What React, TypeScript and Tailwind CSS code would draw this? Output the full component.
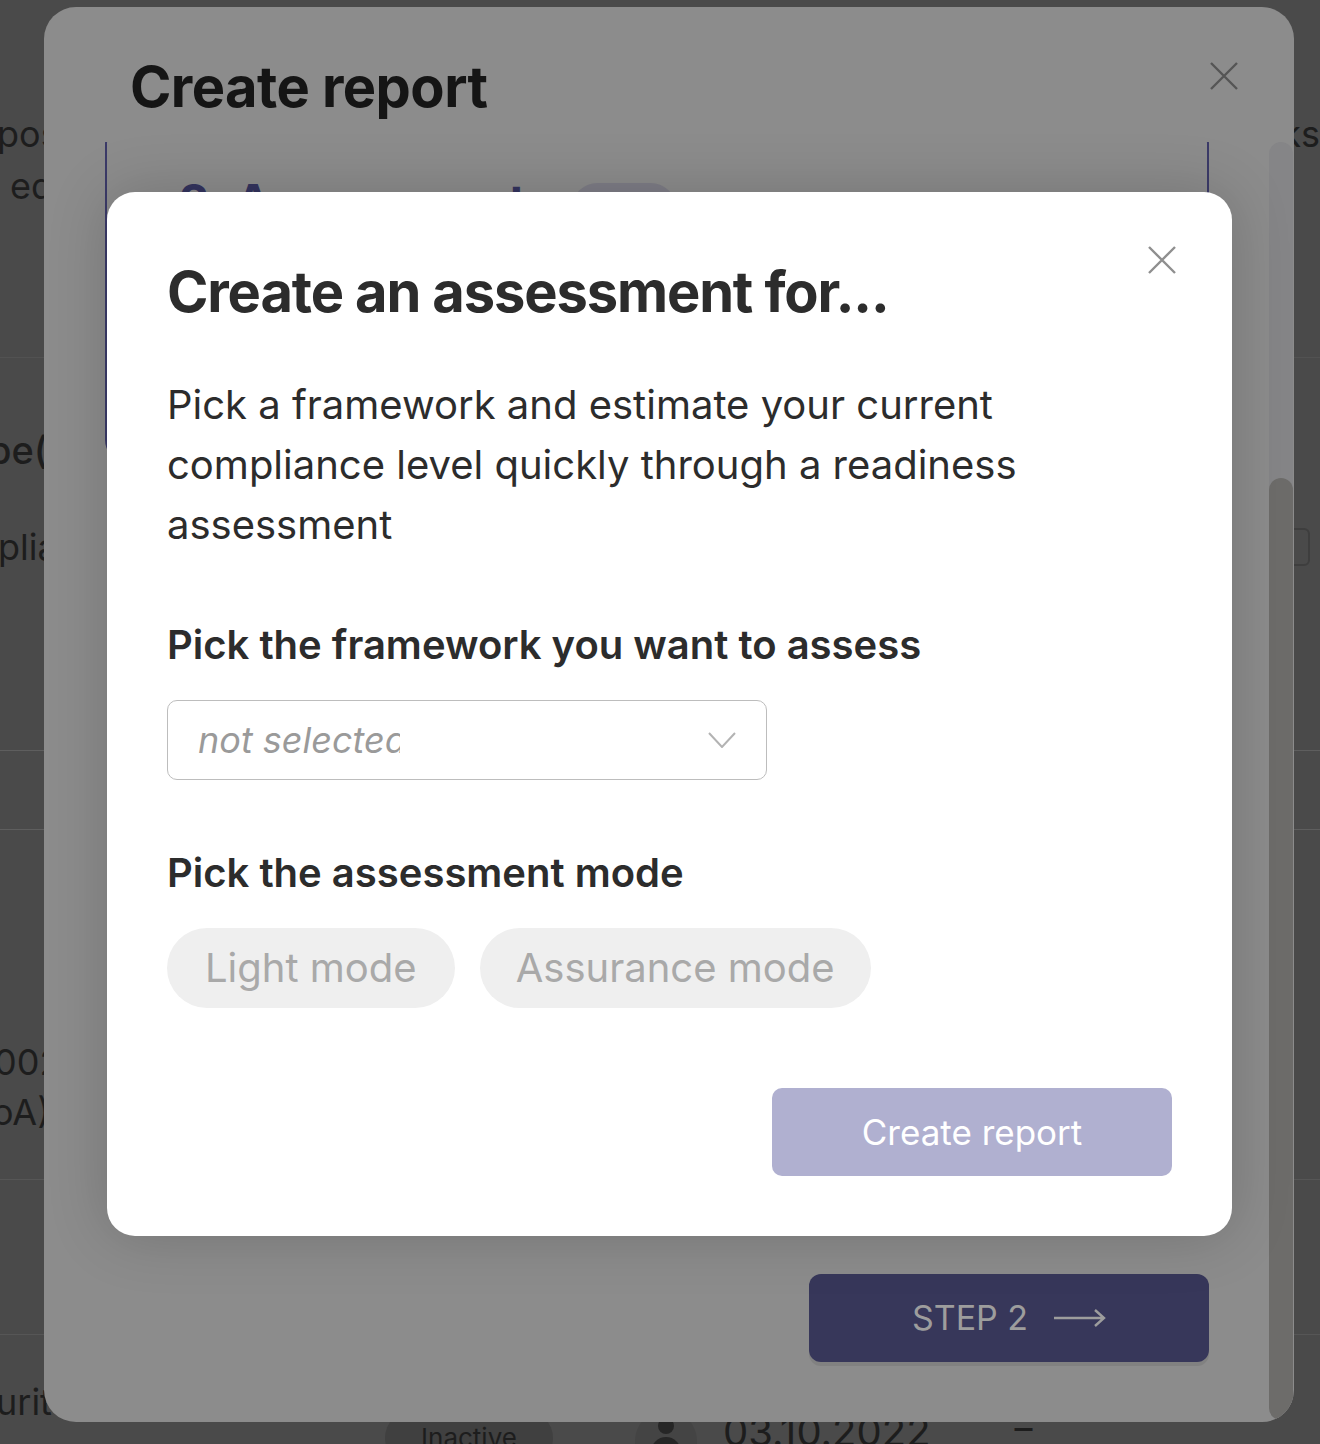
import React from 'react';

const CloseIcon = ({ className }: { className: string }) => (
  <svg viewBox="0 0 28 28" className={className} fill="none" stroke="currentColor" strokeWidth="2.4">
    <path d="M1 1L27 27M27 1L1 27" />
  </svg>
);

const ChevronDown = () => (
  <svg viewBox="0 0 28 16" className="h-[16px] w-[28px] text-[#b3b3b3]" fill="none" stroke="currentColor" strokeWidth="2">
    <path d="M1 1L14 15L27 1" />
  </svg>
);

const LongArrow = () => (
  <svg viewBox="0 0 52 20" className="h-[20px] w-[52px] text-[#9d9d9d]" fill="none" stroke="currentColor" strokeWidth="2.4">
    <path d="M0 10H50M41 2L50 10L41 18" />
  </svg>
);

// the page behind both dialogs, only its edges show
const BackgroundPage = () => (
  <div className="flex flex-col text-[#1d1d1d]">
    <div className="flex h-[358px] justify-between border-b border-[#525252] pt-[108px]">
      <div className="flex flex-col text-[36px] leading-[52px]">
        <span className="-ml-[3px]">pos</span>
        <span className="ml-[10px]">ed</span>
      </div>
      <span className="text-[36px] leading-[52px]">ks</span>
    </div>
    <div className="flex h-[393px] justify-between border-b border-[#5e5e5e] pt-[64px]">
      <div className="flex flex-col">
        <span className="-ml-[12px] text-[38px] font-medium leading-[56px]">pe(</span>
        <span className="-ml-[2px] mt-[44px] text-[36px] leading-[50px]">plia</span>
      </div>
      <div className="mr-[10px] mt-[106px] h-[38px] w-[60px] rounded-[6px] border-2 border-[#3e3e3e]" />
    </div>
    <div className="h-[79px] border-b border-[#5e5e5e]" />
    <div className="flex h-[350px] flex-col border-b border-[#565656] pt-[207px] text-[36px] leading-[50px]">
      <span className="-ml-[6px]">002</span>
      <span className="-ml-[8px]">oA)</span>
    </div>
    <div className="h-[155px] border-b border-[#565656]" />
    <div className="flex h-[109px] items-start">
      <span className="-ml-[4px] mt-[42px] w-[389px] text-[36px] leading-[50px]">urit</span>
      <div className="mt-[75px] flex h-[56px] w-[168px] items-start justify-center rounded-full bg-[#404040] pt-[8px] text-[26px]">
        Inactive
      </div>
      <div className="ml-[82px] mt-[75px] flex h-[62px] w-[62px] justify-center rounded-full bg-[#444444] pt-[8px]">
        <div className="flex flex-col items-center gap-[3px]">
          <div className="h-[16px] w-[16px] rounded-full bg-[#262626]" />
          <div className="h-[16px] w-[30px] rounded-t-full bg-[#262626]" />
        </div>
      </div>
      <span className="ml-[26px] mt-[73px] text-[40px] leading-[48px]">03.10.2022</span>
      <span className="ml-[84px] mt-[68px] text-[36px] leading-[50px]">–</span>
    </div>
  </div>
);

const ReportDialog = () => (
  <div className="absolute left-[44px] top-[7px] flex h-[1415px] w-[1250px] flex-col overflow-hidden rounded-[32px] bg-[#8c8c8c]">
    <div className="flex h-[135px] shrink-0 items-start justify-between pl-[86px] pr-[56px]">
      <h1 className="mt-[45px] text-[56px] font-bold leading-[70px] tracking-[-0.01em] text-[#151515]">Create report</h1>
      <CloseIcon className="mt-[55px] h-[28px] w-[28px] text-[#555555]" />
    </div>
    <div className="flex min-h-0 flex-1 overflow-hidden">
      <div className="flex flex-1 flex-col pl-[61px] pr-[60px]">
        <div className="-mt-[20px] h-[340px] shrink-0 rounded-[22px] border-2 border-[#3b3a68] pl-[72px] pt-[49px]">
          <div className="flex items-start gap-[46px]">
            <span className="text-[48px] font-bold leading-[58px] text-[#34345f]">2. Assessment</span>
            <span className="mt-[10px] h-[50px] w-[104px] rounded-full bg-[#7e7d86]" />
          </div>
        </div>
        <div className="flex-1" />
        <div className="mb-[60px] flex justify-end">
          <button className="flex h-[88px] w-[400px] items-center justify-center gap-[26px] rounded-[12px] bg-[#37375a] shadow-[0_4px_0_rgba(0,0,0,0.08)]">
            <span className="text-[34px] leading-none text-[#9d9d9d]">STEP 2</span>
            <LongArrow />
          </button>
        </div>
      </div>
      <div className="mb-[2px] mr-[1px] flex w-[24px] flex-col rounded-full bg-[#858587]">
        <div className="mt-[336px] flex-1 rounded-full bg-[#6d6c6a]" />
      </div>
    </div>
  </div>
);

const AssessmentDialog = () => (
  <div className="absolute left-[107px] top-[192px] flex h-[1044px] w-[1125px] flex-col rounded-[28px] bg-white px-[60px] pb-[60px] shadow-[0_0_60px_rgba(0,0,0,0.18)]">
    <div className="flex items-start justify-between">
      <h2 className="mt-[66px] text-[56px] font-bold leading-[68px] tracking-[-0.02em] text-[#2c2c2c]">
        Create an assessment for...
      </h2>
      <CloseIcon className="-mr-[4px] mt-[54px] h-[28px] w-[28px] text-[#8f8f8f]" />
    </div>
    <p className="mt-[49px] w-[900px] text-[40px] leading-[60px] text-[#2c2c2c]">
      Pick a framework and estimate your current compliance level quickly through a readiness assessment
    </p>
    <h3 className="mt-[66px] text-[40px] font-semibold leading-[48px] text-[#2c2c2c]">
      Pick the framework you want to assess
    </h3>
    <div className="mt-[31px] flex h-[80px] w-[600px] items-center justify-between rounded-[10px] border border-[#bdbdbd] pl-[30px] pr-[30px]">
      <span className="w-[202px] overflow-hidden whitespace-nowrap text-[36px] italic text-[#9a9a9a]">
        not selected
      </span>
      <ChevronDown />
    </div>
    <h3 className="mt-[69px] text-[40px] font-semibold leading-[48px] text-[#2c2c2c]">
      Pick the assessment mode
    </h3>
    <div className="mt-[31px] flex gap-[25px]">
      <button className="h-[80px] rounded-full bg-[#efefef] px-[38px] text-[40px] text-[#a9a9a9]">Light mode</button>
      <button className="h-[80px] rounded-full bg-[#efefef] px-[36px] text-[40px] text-[#a9a9a9]">Assurance mode</button>
    </div>
    <div className="flex-1" />
    <div className="flex justify-end">
      <button className="h-[88px] w-[400px] rounded-[10px] bg-[#b0b0d0] text-[35px] text-white">Create report</button>
    </div>
  </div>
);

export default function App() {
  return (
    <div className="relative h-[1444px] w-[1320px] overflow-hidden bg-[#4a4a4a] font-['Inter',sans-serif]">
      <BackgroundPage />
      <ReportDialog />
      <AssessmentDialog />
    </div>
  );
}
